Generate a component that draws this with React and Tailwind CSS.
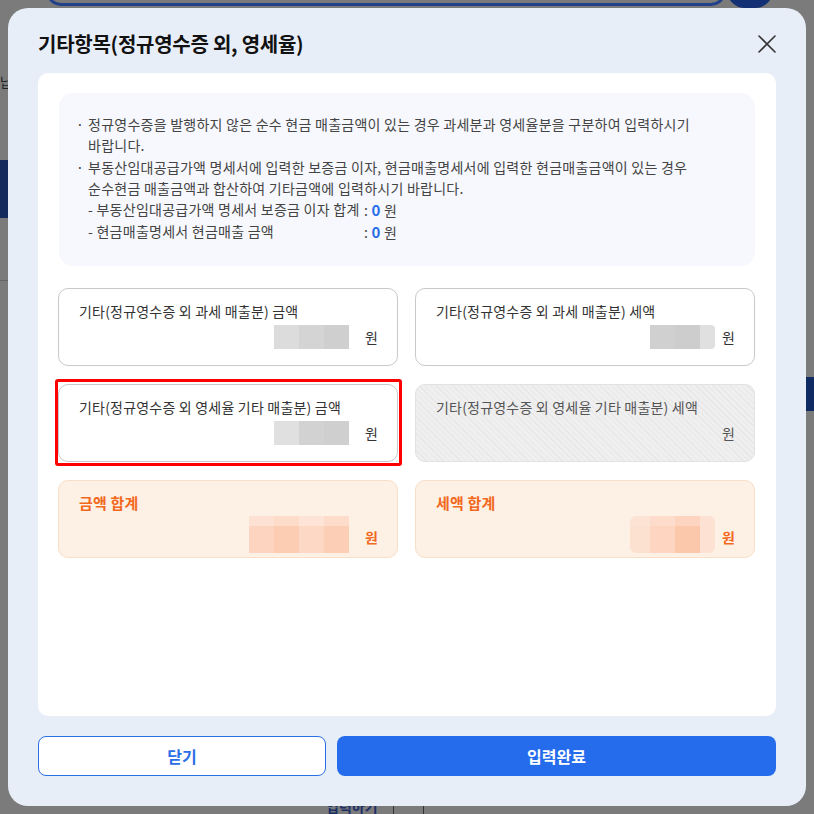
import React from "react";

const font = "font-['Noto_Sans_CJK_KR','Noto_Sans',sans-serif]";

// pixelated (masked) amount box
const Mask = ({ cols, h = "h-[24px]", top, className = "" }) => (
  <div className={`flex overflow-hidden ${h} ${className}`}>
    {cols.map((c, i) => (
      <div key={i} className="flex flex-col" style={{ width: c.w || 25 }}>
        {top && <div className="h-[10px]" style={{ background: c.t }} />}
        <div className="flex-1" style={{ background: c.b }} />
      </div>
    ))}
  </div>
);

const Card = ({ label, children, variant = "normal", highlight }) => {
  const styles = {
    normal: "bg-white border-[#c9c9c9] text-[#333]",
    disabled:
      "border-[#e2e2e2] text-[#555] bg-[repeating-linear-gradient(45deg,#efefef_0px,#efefef_3px,#e7e7e7_3px,#e7e7e7_4px)]",
    sum: "bg-[#fdf0e4] border-[#f8dfc8] text-[#f2691e]",
  };
  return (
    <div className={`relative h-[78px] rounded-[10px] border pl-[20px] pr-[19px] pt-[11px] ${styles[variant]}`}>
      <div
        className={
          variant === "sum"
            ? "text-[15px] font-semibold leading-[22px] tracking-[0.2px]"
            : "text-[14px] leading-[22px] tracking-[0.2px]"
        }
      >
        {label}
      </div>
      <div className="mt-[3px] flex items-center justify-end gap-[16px]">{children}</div>
      {highlight && (
        <div className="pointer-events-none absolute -bottom-[5px] -left-[4px] -right-[5px] -top-[6px] rounded-[3px] border-[3px] border-[#ff0000]" />
      )}
    </div>
  );
};

const Won = ({ className = "" }) => (
  <span className={`text-[14px] leading-[24px] ${className}`}>원</span>
);

export default function App() {
  return (
    <div className={`relative flex h-[814px] w-[814px] items-center justify-center overflow-hidden bg-[#7b7b7b] ${font}`}>
      {/* dimmed page behind the modal */}
      <div className="absolute left-[46px] top-[-24px] h-[30px] w-[680px] rounded-full border-[3px] border-[#23408a]" />
      <div className="absolute left-[727px] top-[-28px] h-[36px] w-[46px] rounded-full bg-[#133074]" />
      <div className="absolute left-[0px] top-[72px] text-[13px] text-[#222]">납</div>
      <div className="absolute left-0 top-[160px] h-[58px] w-[10px] bg-[#142a5c]" />
      <div className="absolute left-0 top-[280px] h-px w-[10px] bg-[#666]" />
      <div className="absolute right-0 top-[377px] h-[34px] w-[10px] bg-[#102a63]" />
      <div className="absolute left-[326px] top-[796px] text-[14px] font-bold text-[#1c2f66]">입력하기</div>
      <div className="absolute left-[393px] top-[804px] h-[10px] w-px bg-[#333]" />
      <div className="absolute left-[423px] top-[804px] h-[10px] w-px bg-[#333]" />

      {/* modal */}
      <div className="relative flex h-[798px] w-[798px] flex-col rounded-[20px] bg-[#e8eef8] px-[30px] pb-[30px] pt-[24px]">
        <div className="flex h-[24px] items-center justify-between">
          <h1 className="text-[20px] font-bold leading-[24px] tracking-[-0.25px] text-[#111]">
            기타항목(정규영수증 외, 영세율)
          </h1>
          <svg width="20" height="20" viewBox="0 0 20 20" className="mr-[-1px]">
            <path d="M2 2 L18 18 M18 2 L2 18" stroke="#333" strokeWidth="1.6" strokeLinecap="round" />
          </svg>
        </div>

        <div className="mt-[17px] flex-1 rounded-[10px] bg-white pl-[20px] pr-[21px] pt-[20px]">
          {/* notice */}
          <div className="ml-[1px] h-[173px] rounded-[14px] bg-[#f6f8fd] pl-[17px] pr-[52px] pt-[21px] text-[14px] leading-[21px] tracking-[0.25px] text-[#444]">
            <div className="flex">
              <span className="w-[12px] shrink-0">·</span>
              <p>정규영수증을 발행하지 않은 순수 현금 매출금액이 있는 경우 과세분과 영세율분을 구분하여 입력하시기 바랍니다.</p>
            </div>
            <div className="mt-[1px] flex">
              <span className="w-[12px] shrink-0">·</span>
              <div>
                <p>
                  부동산임대공급가액 명세서에 입력한 보증금 이자, 현금매출명세서에 입력한 현금매출금액이 있는 경우
                  <br />
                  순수현금 매출금액과 합산하여 기타금액에 입력하시기 바랍니다.
                </p>
                <div className="flex">
                  <span className="w-[276px] whitespace-nowrap">- 부동산임대공급가액 명세서 보증금 이자 합계</span>
                  <span>
                    : <b className="text-[15px] text-[#2a6ee8]">0</b> 원
                  </span>
                </div>
                <div className="flex">
                  <span className="w-[276px]">- 현금매출명세서 현금매출 금액</span>
                  <span>
                    : <b className="text-[15px] text-[#2a6ee8]">0</b> 원
                  </span>
                </div>
              </div>
            </div>
          </div>

          {/* amount cards */}
          <div className="mt-[22px] grid grid-cols-2 gap-x-[17px] gap-y-[18px]">
            <Card label="기타(정규영수증 외 과세 매출분) 금액">
              <Mask cols={[{ b: "#dcdcdc" }, { b: "#d4d4d4" }, { b: "#cfcfcf" }]} />
              <Won />
            </Card>
            <Card label="기타(정규영수증 외 과세 매출분) 세액">
              <Mask
                className="rounded-r-[4px]"
                cols={[{ b: "#d0d0d0" }, { b: "#cdcdcd" }, { b: "#e0e0e0", w: 15 }]}
              />
              <Won className="-ml-[9px]" />
            </Card>
            <Card label="기타(정규영수증 외 영세율 기타 매출분) 금액" highlight>
              <Mask cols={[{ b: "#e0e0e0" }, { b: "#d2d2d2" }, { b: "#cfcfcf" }]} />
              <Won />
            </Card>
            <Card label="기타(정규영수증 외 영세율 기타 매출분) 세액" variant="disabled">
              <div className="h-[24px]" />
              <Won />
            </Card>
            <Card label="금액 합계" variant="sum">
              <Mask
                top
                h="h-[37px]"
                className="-mt-[5px] mb-[-8px]"
                cols={[
                  { t: "#fde2d3", b: "#fcd4bf" },
                  { t: "#fddcc9", b: "#fcccb3" },
                  { t: "#fde4d6", b: "#fdd8c5" },
                  { t: "#fddccb", b: "#fcceb6" },
                ]}
              />
              <Won className="mt-[8px] font-semibold" />
            </Card>
            <Card label="세액 합계" variant="sum">
              <Mask
                top
                h="h-[37px]"
                className="-mt-[5px] mb-[-8px] rounded-[6px]"
                cols={[
                  { t: "#fde3d4", b: "#fde1d0", w: 20 },
                  { t: "#fddccb", b: "#fdd5c0" },
                  { t: "#fdd4bf", b: "#fcc8ac" },
                  { t: "#fde2d3", b: "#fde2d3", w: 15 },
                ]}
              />
              <Won className="-ml-[9px] mt-[8px] font-semibold" />
            </Card>
          </div>
        </div>

        {/* buttons */}
        <div className="mt-[20px] flex h-[40px] gap-[11px]">
          <button className="w-[288px] rounded-[8px] border border-[#2a6ee8] bg-white text-[16px] font-bold text-[#2a6ee8]">
            닫기
          </button>
          <button className="flex-1 rounded-[8px] bg-[#256ced] text-[16px] font-bold text-white">
            입력완료
          </button>
        </div>
      </div>
    </div>
  );
}
